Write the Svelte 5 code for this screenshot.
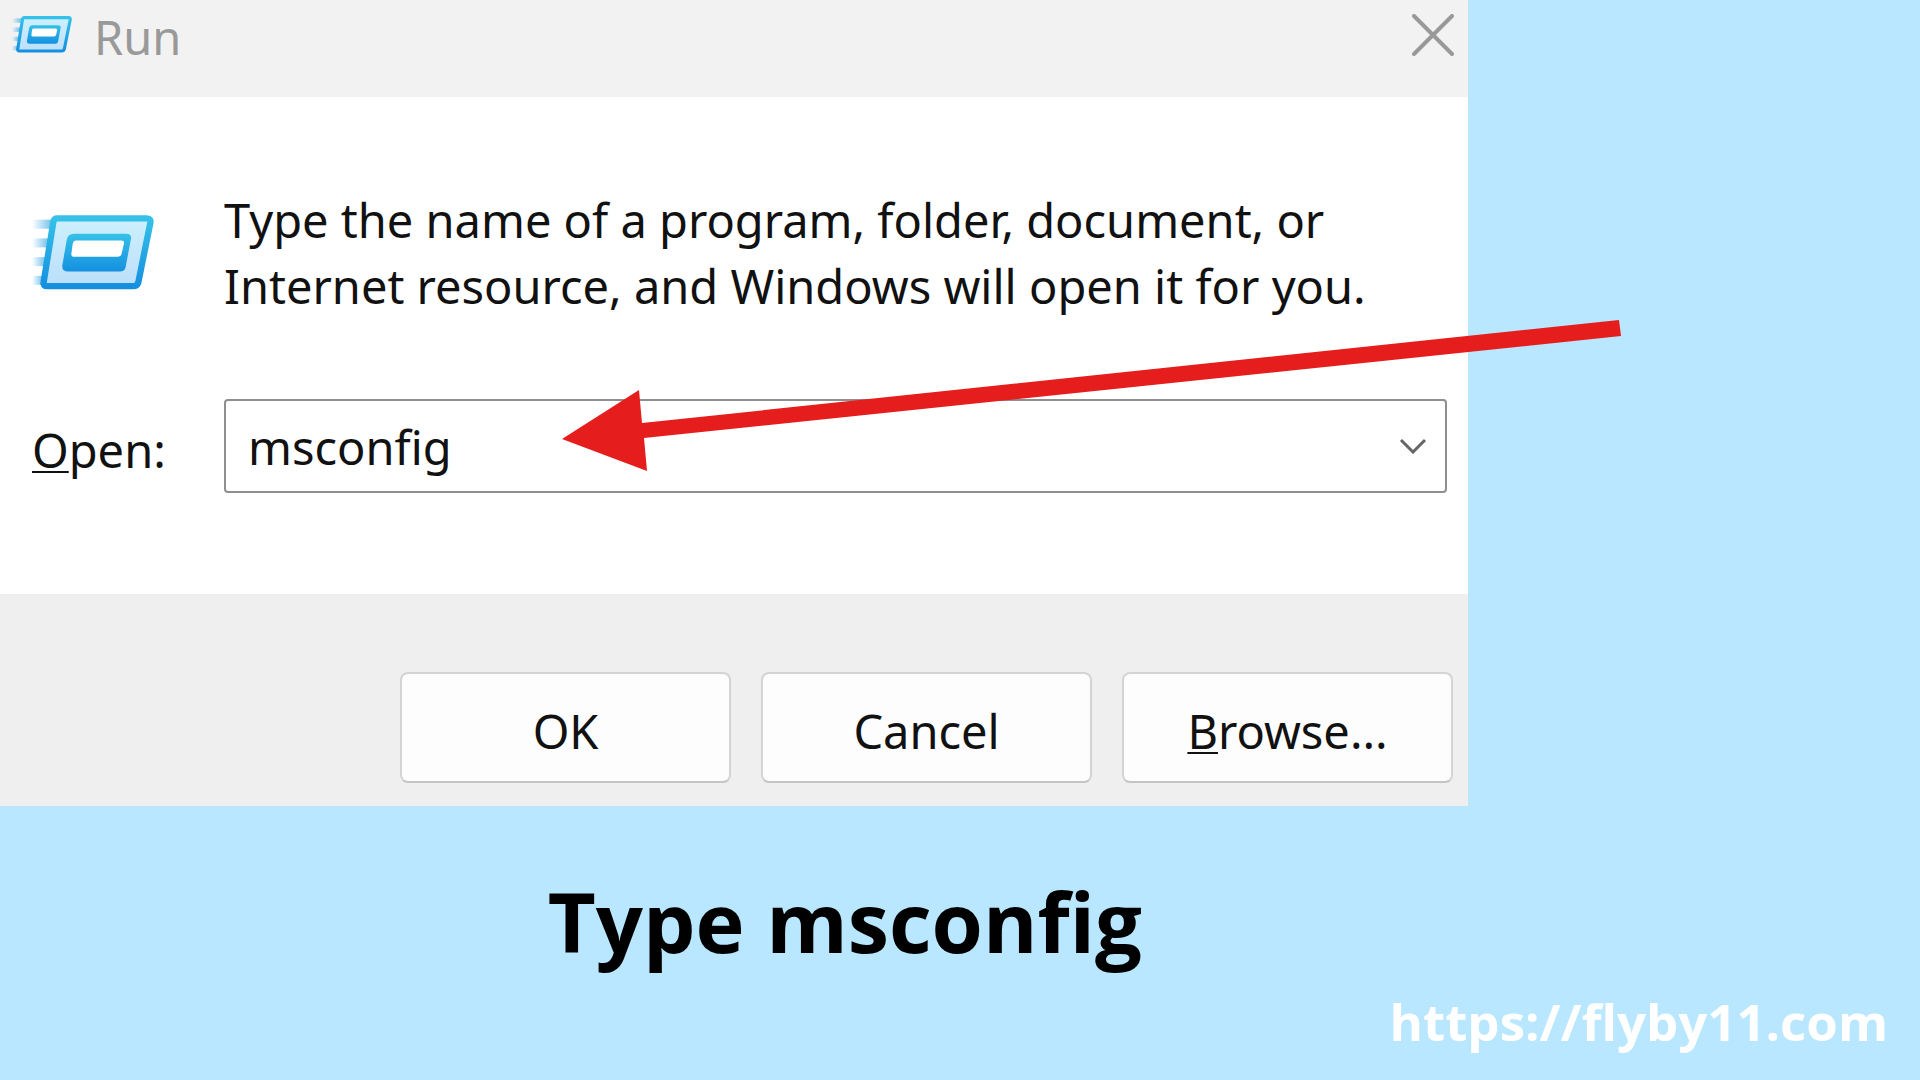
<script>
    let command = 'msconfig';
    let commandInput;

    function clearCommand() {
        command = '';
        commandInput.focus();
    }
</script>

{#snippet runIcon(id)}
    <svg class="run-icon" viewBox="0 0 365 225" aria-hidden="true">
        <defs>
            <linearGradient id="{id}-frame" x1="0" y1="0" x2="0" y2="1">
                <stop offset="0" stop-color="#35c1e8" />
                <stop offset="1" stop-color="#1590e0" />
            </linearGradient>
            <linearGradient id="{id}-panel" x1="0" y1="0" x2="0" y2="1">
                <stop offset="0" stop-color="#cdf0fd" />
                <stop offset="1" stop-color="#bcdffb" />
            </linearGradient>
            <linearGradient id="{id}-trail" x1="0" y1="0" x2="1" y2="0">
                <stop offset="0" stop-color="#5fb8e8" stop-opacity="0" />
                <stop offset="1" stop-color="#5fb8e8" />
            </linearGradient>
        </defs>
        <g fill="url(#{id}-trail)">
            <rect x="0" y="14" width="68" height="27" />
            <rect x="0" y="70" width="56" height="27" />
            <rect x="0" y="126" width="46" height="27" />
            <rect x="0" y="182" width="38" height="27" />
        </g>
        <path
            d="M76 10H344Q357 10 354 24L318 202Q315 213 303 213H46Q32 213 35 200L64 20Q66 10 76 10Z"
            fill="url(#{id}-panel)"
            stroke="url(#{id}-frame)"
            stroke-width="19"
        />
        <path
            d="M126 56H282Q299 56 296 72L280 156Q277 169 263 169H108Q88 169 91 149L104 74Q107 56 126 56Z"
            fill="url(#{id}-frame)"
        />
        <path
            d="M132 76H267Q277 76 275 86L268 116Q266 125 256 125H127Q116 125 118 114L122 85Q124 76 132 76Z"
            fill="#fff"
        />
    </svg>
{/snippet}

<main class="page">
    <section class="dialog" aria-labelledby="dialog-title">
        <header class="titlebar">
            {@render runIcon('small')}
            <h1 id="dialog-title">Run</h1>
            <button class="close" type="button" aria-label="Close">
                <svg viewBox="0 0 42 42" aria-hidden="true">
                    <path d="M2 2L40 40M40 2L2 40" />
                </svg>
            </button>
        </header>

        <div class="body">
            <div class="icon-cell">{@render runIcon('large')}</div>
            <p>
                Type the name of a program, folder, document, or<br />
                Internet resource, and Windows will open it for you.
            </p>
            <label for="command"><u>O</u>pen:</label>
            <div class="combo">
                <input id="command" type="text" spellcheck="false" bind:value={command} bind:this={commandInput} />
                <button type="button" aria-label="Show recent commands">
                    <svg viewBox="0 0 28 16" aria-hidden="true">
                        <path d="M2 2L14 14L26 2" />
                    </svg>
                </button>
            </div>
        </div>

        <footer class="actions">
            <button type="button">OK</button>
            <button type="button" on:click={clearCommand}>Cancel</button>
            <button type="button"><span><u>B</u>rowse...</span></button>
        </footer>
    </section>

    <h2 class="caption">Type msconfig</h2>
    <a class="site" href="https://flyby11.com">https://flyby11.com</a>

    <!-- Arrow from the empty side area to the command box -->
    <svg class="arrow" viewBox="0 0 1920 1080" aria-hidden="true">
        <path d="M562 439L639 390L642 423L1619 320L1621 336L644 438L647 471Z" />
    </svg>
</main>

<style>
    :global(body) {
        margin: 0;
        background: #b8e7ff;
    }

    .page {
        position: relative;
        display: flex;
        flex-direction: column;
        align-items: flex-start;
        min-height: 100vh;
        overflow: hidden;
        background: #b8e7ff;
        font-family: 'Noto Sans', 'Open Sans', sans-serif;
        font-size: 47px;
        line-height: 66px;
        color: #111;
    }

    h1,
    h2,
    p {
        margin: 0;
        font-weight: 400;
    }

    h1 {
        font-size: 47px;
    }

    button,
    input {
        font: inherit;
        color: inherit;
    }

    u {
        text-decoration-thickness: 2px;
        text-underline-offset: 3px;
        text-decoration-skip-ink: none;
    }

    .run-icon {
        display: block;
        width: 122px;
    }

    .dialog {
        width: 76.46%;
        background: #fff;
    }

    .titlebar {
        display: flex;
        align-items: flex-start;
        box-sizing: border-box;
        height: 97px;
        padding: 4px 14px 0 12px;
        background: #f2f2f2;
        color: #999;
    }

    .titlebar .run-icon {
        width: 60px;
        margin: 12px 22px 0 0;
    }

    .close {
        display: flex;
        margin: 10px 0 0 auto;
        padding: 0;
        border: 0;
        background: none;
    }

    .close svg {
        width: 42px;
        height: 42px;
        fill: none;
        stroke: #999;
        stroke-width: 4;
        stroke-linecap: round;
    }

    .body {
        display: grid;
        grid-template-columns: 192px 1fr;
        row-gap: 80px;
        align-items: center;
        padding: 90px 21px 101px 32px;
    }

    .body p {
        white-space: nowrap;
    }

    .body label {
        padding-top: 8px;
    }

    .combo {
        display: flex;
        box-sizing: border-box;
        height: 94px;
        border: 2px solid #8f8f8f;
        border-radius: 4px;
        background: #fff;
    }

    .combo input {
        flex: 1;
        min-width: 0;
        padding: 2px 22px 0;
        border: 0;
        outline: 0;
        background: none;
    }

    .combo button {
        padding: 0 18px;
        border: 0;
        background: none;
    }

    .combo svg {
        display: block;
        width: 28px;
        height: 16px;
        fill: none;
        stroke: #666;
        stroke-width: 3;
    }

    .actions {
        display: flex;
        justify-content: flex-end;
        gap: 30px;
        padding: 78px 15px 23px;
        background: #efefef;
    }

    .actions button {
        width: 331px;
        height: 111px;
        padding: 6px 0 0;
        border: 2px solid #d4d4d4;
        border-bottom-color: #c4c4c4;
        border-radius: 8px;
        background: #fdfdfd;
    }

    .caption {
        width: 88%;
        margin-top: 58px;
        font-family: 'Open Sans', 'Noto Sans', sans-serif;
        font-size: 83px;
        font-weight: 700;
        line-height: 114px;
        text-align: center;
        color: #000;
    }

    .site {
        align-self: flex-end;
        margin: 8px 32px 0 0;
        font-family: 'Open Sans', 'Noto Sans', sans-serif;
        font-size: 51px;
        font-weight: 700;
        line-height: 70px;
        text-decoration: none;
        color: #fff;
    }

    .arrow {
        position: absolute;
        top: 0;
        left: 0;
        width: 100%;
        fill: #e61d1d;
        pointer-events: none;
    }
</style>
